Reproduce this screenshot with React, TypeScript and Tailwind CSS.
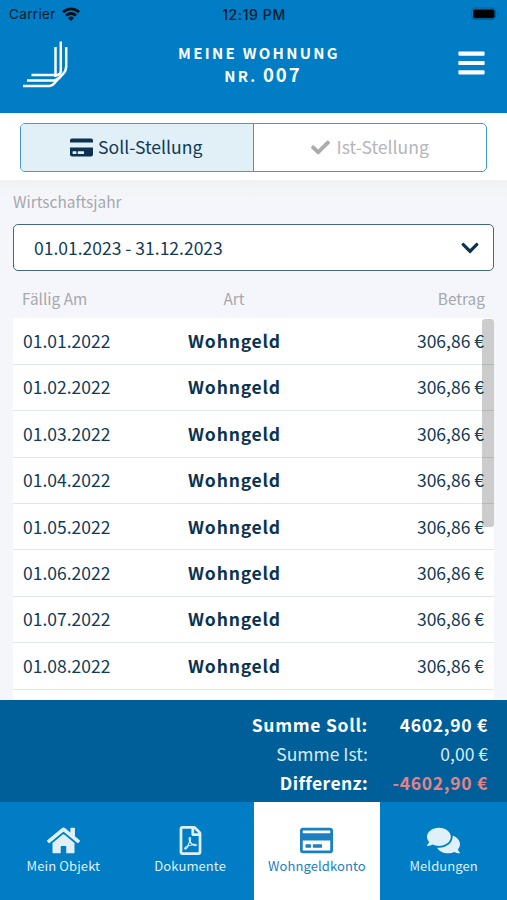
import { FaBars, FaCheck, FaChevronDown, FaComments, FaCreditCard, FaHome, FaRegCreditCard, FaRegFilePdf } from "react-icons/fa"

const bookings = [
  { date: "01.01.2022", type: "Wohngeld", amount: "306,86 €" },
  { date: "01.02.2022", type: "Wohngeld", amount: "306,86 €" },
  { date: "01.03.2022", type: "Wohngeld", amount: "306,86 €" },
  { date: "01.04.2022", type: "Wohngeld", amount: "306,86 €" },
  { date: "01.05.2022", type: "Wohngeld", amount: "306,86 €" },
  { date: "01.06.2022", type: "Wohngeld", amount: "306,86 €" },
  { date: "01.07.2022", type: "Wohngeld", amount: "306,86 €" },
  { date: "01.08.2022", type: "Wohngeld", amount: "306,86 €" },
]

const tabs = [
  { label: "Mein Objekt", icon: FaHome, size: "h-[33px] w-[33px]", active: false },
  { label: "Dokumente", icon: FaRegFilePdf, size: "h-[29px] w-[29px]", active: false },
  { label: "Wohngeldkonto", icon: FaRegCreditCard, size: "h-[33px] w-[33px]", active: true },
  { label: "Meldungen", icon: FaComments, size: "h-[33px] w-[33px]", active: false },
]

function StatusBar() {
  return (
    <div className="grid h-7 grid-cols-3 items-center pl-[9px] pr-2 font-['Inter',sans-serif] text-[13.5px] text-[#071b2b]">
      <div className="flex items-center gap-1.5">
        <span className="tracking-[0.35px]">Carrier</span>
        <svg viewBox="0 0 18 14" className="h-3.5 w-[18px]" fill="none" stroke="#03121d" strokeWidth="2.8">
          <path d="M1 5.2a11.5 11.5 0 0 1 16 0" />
          <path d="M4 8.5a7.2 7.2 0 0 1 10 0" />
          <path d="M9 14 6 11a4.3 4.3 0 0 1 6 0Z" fill="#03121d" stroke="none" />
        </svg>
      </div>
      <span className="text-center text-[14px] font-medium tracking-[0.6px]">12:19 PM</span>
      <svg viewBox="0 0 28 14" className="h-3.5 w-7 justify-self-end">
        <rect x="0.5" y="1" width="24" height="11.5" rx="3.5" fill="none" stroke="#045a91" />
        <rect x="2" y="2.5" width="21.5" height="8.8" rx="2" fill="#000" />
        <path d="M26 5v4c1.6-.6 1.6-3.4 0-4Z" fill="#045a91" />
      </svg>
    </div>
  )
}

function Logo() {
  return (
    <svg viewBox="0 0 46 47" className="h-[47px] w-[46px]" fill="none" stroke="#fff" strokeWidth="2.5">
      <path d="M32.5 6V36M8.5 34H34.500Q37.800 33 37.800 30V0.500" />
      <path d="M4 39.400H31Q34 39 36 37L40.500 32.500Q43.200 29.500 43.200 25V6" />
      <path d="M0 45H26.500Q30 44.500 32 41.500L38.500 34.500" />
    </svg>
  )
}

export default function App() {
  return (
    <div className="flex h-[900px] w-[507px] flex-col overflow-hidden bg-[#f5f6fb] font-['Noto_Sans_CJK_SC',sans-serif] text-[#123a56]">
      <header className="h-[113px] shrink-0 bg-[#007dc5]">
        <StatusBar />
        <div className="flex items-start justify-between pl-[23px] pr-[22px] pt-[13px] text-white">
          <Logo />
          <h1 className="-ml-[9px] pt-px text-center font-bold">
            <span className="block text-[15px] leading-[22px] tracking-[2.3px]">MEINE WOHNUNG</span>
            <span className="block pl-2 text-[15px] leading-[21px] tracking-[2.2px]">
              NR. <span className="text-[18.5px] tracking-[2px]">007</span>
            </span>
          </h1>
          <FaBars className="mt-[7px] h-[30px] w-[27px]" />
        </div>
      </header>

      {/* Soll / Ist switch */}
      <div className="h-[67px] shrink-0 bg-white px-5 pt-[10px]">
        <div className="grid h-[49px] grid-cols-2 overflow-hidden rounded-[5px] border-[1.5px] border-[#4598d0] text-[17.6px]">
          <button className="flex items-center justify-center gap-[5px] border-r border-[#4598d0] bg-[#e0f0f6] pb-px pr-px">
            <FaCreditCard className="mt-px h-[23px] w-[23px] text-[#0b3350]" />
            Soll-Stellung
          </button>
          <button className="flex items-center justify-center gap-[7px] pb-px text-[#b4b6b8]">
            <FaCheck className="mt-px h-[19px] w-[19px] text-[#a9abac]" />
            Ist-Stellung
          </button>
        </div>
      </div>

      <main className="flex min-h-0 flex-1 flex-col bg-linear-to-b from-[#f1f2f4] to-[#f5f6fb] to-[20px] px-[13px]">
        <label className="mt-[10px] block text-[15.4px] leading-[22px] text-[#a6a8ab]">Wirtschaftsjahr</label>
        <div className="mt-[12px] flex h-[47px] shrink-0 items-center justify-between rounded-[5px] border-[1.5px] border-[#45687f] bg-white pl-5 pr-[13px] text-[17.5px]">
          <span className="pt-[2px]">01.01.2023 - 31.12.2023</span>
          <FaChevronDown className="h-5 w-5 text-[#0b3350]" />
        </div>

        <div className="mt-[16px] grid h-[31px] shrink-0 grid-cols-3 px-[9px] text-[15.4px] leading-[22px] text-[#a6a8ab]">
          <span>Fällig Am</span>
          <span className="-ml-[39px] text-center">Art</span>
          <span className="text-right">Betrag</span>
        </div>

        <div className="relative min-h-0 flex-1 overflow-hidden rounded-t bg-white pt-[0.4px]">
          {bookings.map((booking) => (
            <div
              key={booking.date}
              className="grid h-[46.4px] grid-cols-3 items-center border-b-[1.5px] border-[#e3e6e8] px-[10px] text-[17.5px]"
            >
              <span>{booking.date}</span>
              <span className="-ml-[38px] text-center font-bold tracking-[0.8px] text-[#0b3350]">{booking.type}</span>
              <span className="text-right">{booking.amount}</span>
            </div>
          ))}
          <div className="absolute right-0 top-px h-[208px] w-3 rounded-[3px] bg-black/20" />
        </div>
      </main>

      <div className="grid h-[102px] shrink-0 grid-cols-[1fr_120px] content-start bg-[#005f99] pr-[19px] pt-[10px] text-right text-[17.5px] leading-[29px] text-white">
        <span className="font-bold tracking-[0.7px]">Summe Soll:</span>
        <span className="font-bold tracking-[0.7px]">4602,90 €</span>
        <span className="text-[#d8ebf5]">Summe Ist:</span>
        <span className="text-[#d8ebf5]">0,00 €</span>
        <span className="font-bold tracking-[0.4px]">Differenz:</span>
        <span className="font-bold tracking-[0.7px] text-[#e58288]">-4602,90 €</span>
      </div>

      <nav className="grid h-[98px] shrink-0 grid-cols-4 bg-[#007dc5]">
        {tabs.map(({ label, icon: Icon, size, active }) => (
          <div
            key={label}
            className={`flex flex-col items-center pt-[21px] ${active ? "bg-white text-[#1b7fc0]" : "text-[#dff0f9]"}`}
          >
            <div className="flex h-[34px] items-center">
              <Icon className={size} />
            </div>
            <span className="text-[13px] leading-[18px] tracking-[0.1px]">{label}</span>
          </div>
        ))}
      </nav>
    </div>
  )
}
